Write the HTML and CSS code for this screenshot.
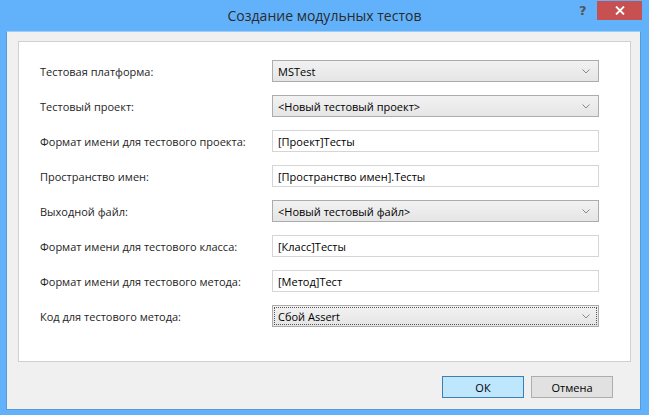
FILE: index.html
```html
<!DOCTYPE html>
<html lang="ru">
<head>
<meta charset="utf-8">
<title>Создание модульных тестов</title>
<link rel="stylesheet" href="styles.css">
</head>
<body>
<div class="window">
  <div class="titlebar">
    <div class="title">Создание модульных тестов</div>
    <div class="help">?</div>
    <div class="close">
      <svg width="10" height="9" viewBox="0 0 10 9"><path d="M1 0.5 L9 8.5 M9 0.5 L1 8.5" stroke="#fff" stroke-width="1.8"/></svg>
    </div>
  </div>
  <div class="client">
    <div class="panel">
      <div class="row"><span class="label">Тестовая платформа:</span><div class="combo"><span>MSTest</span><svg class="chev" width="8" height="5" viewBox="0 0 8 5"><path d="M0.5 0.5 L4 4 L7.5 0.5" fill="none" stroke="#888" stroke-width="1"/></svg></div></div>
      <div class="row"><span class="label">Тестовый проект:</span><div class="combo"><span>&lt;Новый тестовый проект&gt;</span><svg class="chev" width="8" height="5" viewBox="0 0 8 5"><path d="M0.5 0.5 L4 4 L7.5 0.5" fill="none" stroke="#888" stroke-width="1"/></svg></div></div>
      <div class="row"><span class="label">Формат имени для тестового проекта:</span><div class="field">[Проект]Тесты</div></div>
      <div class="row"><span class="label">Пространство имен:</span><div class="field">[Пространство имен].Тесты</div></div>
      <div class="row"><span class="label">Выходной файл:</span><div class="combo"><span>&lt;Новый тестовый файл&gt;</span><svg class="chev" width="8" height="5" viewBox="0 0 8 5"><path d="M0.5 0.5 L4 4 L7.5 0.5" fill="none" stroke="#888" stroke-width="1"/></svg></div></div>
      <div class="row"><span class="label">Формат имени для тестового класса:</span><div class="field">[Класс]Тесты</div></div>
      <div class="row"><span class="label">Формат имени для тестового метода:</span><div class="field">[Метод]Тест</div></div>
      <div class="row"><span class="label">Код для тестового метода:</span><div class="combo focused"><span>Сбой Assert</span><svg class="chev" width="8" height="5" viewBox="0 0 8 5"><path d="M0.5 0.5 L4 4 L7.5 0.5" fill="none" stroke="#888" stroke-width="1"/></svg></div></div>
    </div>
    <div class="buttons">
      <div class="btn ok">ОК</div>
      <div class="btn cancel">Отмена</div>
    </div>
  </div>
</div>
</body>
</html>
```

FILE: styles.css
```css
html, body {
  margin: 0;
  padding: 0;
}
body {
  width: 649px;
  height: 415px;
  background: #62b2fb;
  font-family: "Open Sans", "Noto Sans", sans-serif;
  overflow: hidden;
}
.window {
  width: 649px;
  height: 415px;
  display: flex;
  flex-direction: column;
}
.titlebar {
  height: 31px;
  position: relative;
  display: flex;
  justify-content: center;
}
.title {
  font-size: 14px;
  color: #2b2b2b;
  line-height: 31px;
}
.help {
  position: absolute;
  left: 579px;
  top: 3px;
  font-size: 13px;
  font-weight: bold;
  color: #555;
  font-family: "DejaVu Sans", sans-serif;
}
.close {
  position: absolute;
  left: 597px;
  top: 1px;
  width: 45px;
  height: 19px;
  background: #c75050;
  display: flex;
  align-items: center;
  justify-content: center;
}
.client {
  margin: 0 8px 5px 6px;
  flex: 1;
  background: #f0f0f0;
  border: 1px solid #569ad8;
  border-top-color: #9fcdf7;
  padding: 9px 9px 0 11px;
  display: flex;
  flex-direction: column;
}
.panel {
  height: 321px;
  background: #fff;
  border: 1px solid #d0d0d0;
  box-sizing: border-box;
  padding: 18px 31px 0 21px;
  display: flex;
  flex-direction: column;
  gap: 13px;
}
.row {
  display: flex;
  align-items: center;
  height: 22px;
}
.label {
  width: 232px;
  font-size: 11px;
  color: #1e1e1e;
}
.combo, .field {
  flex: 1;
  height: 22px;
  box-sizing: border-box;
  font-size: 11px;
  color: #000;
  display: flex;
  align-items: center;
  padding-left: 5px;
  position: relative;
}
.combo {
  border: 1px solid #acacac;
  background: linear-gradient(#f2f2f2, #e5e5e5);
}
.field {
  border: 1px solid #d5d5d5;
  background: #fff;
}
.chev {
  position: absolute;
  right: 8px;
  top: 8px;
}
.focused::after {
  content: "";
  position: absolute;
  left: 1px;
  top: 1px;
  right: 1px;
  bottom: 1px;
  border: 1px dotted #555;
}
.buttons {
  display: flex;
  justify-content: flex-end;
  gap: 7px;
  padding: 14px 18px 0 0;
}
.btn {
  width: 82px;
  height: 22px;
  box-sizing: border-box;
  font-size: 11px;
  color: #000;
  display: flex;
  align-items: center;
  justify-content: center;
}
.ok {
  background: #bee6fd;
  border: 1px solid #3c7fb1;
}
.cancel {
  background: #e1e1e1;
  border: 1px solid #adadad;
}
```
